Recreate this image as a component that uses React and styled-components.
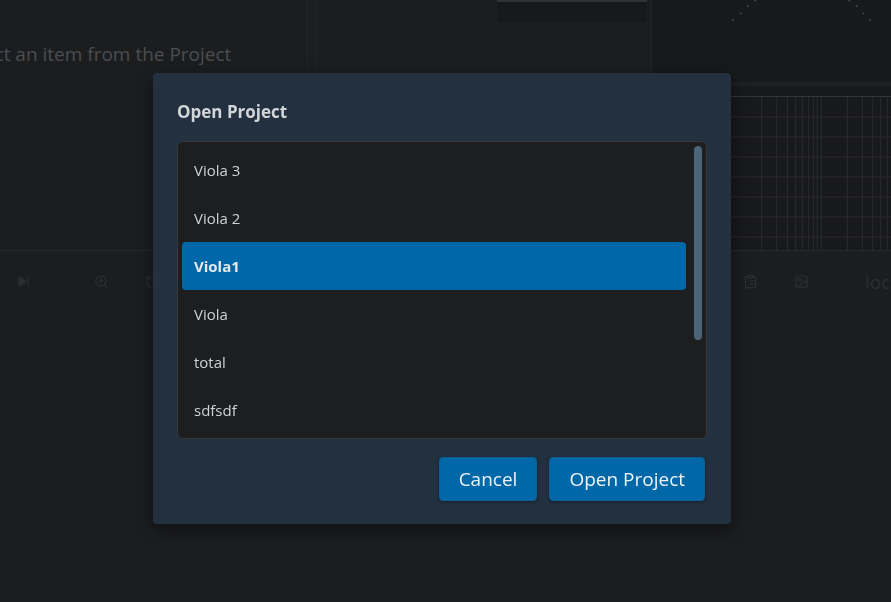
import React from "react";
import styled, { createGlobalStyle } from "styled-components";
import { SkipForward, ZoomIn, RotateCcw, ClipboardList, Image } from "lucide-react";

const GlobalStyle = createGlobalStyle`
  * { box-sizing: border-box; }
  html, body { margin: 0; padding: 0; background: #1c1d1f; }
  body { font-family: "Open Sans", "Noto Sans", sans-serif; overflow: hidden; }
`;

const Shell = styled.div`
  width: 891px;
  height: 602px;
  display: flex;
  flex-direction: column;
  background: #1c1d1f;
  overflow: hidden;
`;

const TopArea = styled.div`
  height: 251px;
  display: flex;
  border-bottom: 1px solid #27282b;
  flex-shrink: 0;
`;

const LeftPanel = styled.div`
  width: 308px;
  border-right: 1px solid #242528;
  padding-top: 40px;
  overflow: hidden;
`;

const Hint = styled.div`
  margin-left: -42px;
  font-size: 19px;
  line-height: 28px;
  color: #4a4d51;
  white-space: nowrap;
`;

const Gutter = styled.div`
  width: 9px;
  border-right: 1px solid #232427;
`;

const MiddlePanel = styled.div`
  width: 335px;
  display: flex;
  justify-content: flex-end;
  padding-right: 3px;
  border-right: 2px solid #1f2023;
`;

const FieldStub = styled.div`
  width: 150px;
  height: 22px;
  background: #18191b;
  border-top: 2px solid #303134;
`;

const RightPanel = styled.div`
  flex: 1;
  display: flex;
  flex-direction: column;
  background: #18191b;
`;

const DotsArea = styled.svg`
  display: block;
  height: 82px;
  width: 100%;
`;

const Band = styled.div`
  height: 4px;
  background: #1f2023;
`;

const Spacer = styled.div`
  height: ${(p) => p.$h}px;
`;

const RuleLine = styled.div`
  height: 1px;
  background: #35363a;
`;

const Grid = styled.svg`
  display: block;
  width: 100%;
  height: 153px;
`;

const Toolbar = styled.div`
  height: 61px;
  display: flex;
  align-items: center;
  justify-content: space-between;
  color: #2b2d30;
`;

const ToolGroup = styled.div`
  display: flex;
  align-items: center;
`;

const ToolSlot = styled.div`
  width: 30px;
  display: flex;
  justify-content: center;
  margin-left: ${(p) => p.$ml || 0}px;
`;

const ToolText = styled.span`
  margin-left: ${(p) => p.$ml || 0}px;
  width: 26px;
  overflow: hidden;
  white-space: nowrap;
  font-size: 19px;
  line-height: 28px;
  color: #2b2d30;
`;

const Backdrop = styled.div`
  position: fixed;
  inset: 0;
  display: flex;
  align-items: flex-start;
  padding: 73px 0 0 153px;
`;

const Dialog = styled.div`
  width: 578px;
  height: 451px;
  background: #22303f;
  border-radius: 4px;
  padding: 24px;
  display: flex;
  flex-direction: column;
  box-shadow: 0 6px 18px rgba(0, 0, 0, 0.45);
`;

const Title = styled.h2`
  margin: 0;
  padding-top: 1px;
  font-size: 17px;
  line-height: 28px;
  font-weight: 700;
  color: #d3d6d9;
`;

const ListBox = styled.div`
  margin-top: 15px;
  height: 298px;
  display: flex;
  padding: 4px;
  background: #1d1e20;
  border: 1px solid #36383b;
  border-radius: 6px;
`;

const Items = styled.div`
  flex: 1;
  display: flex;
  flex-direction: column;
  overflow: hidden;
`;

const Item = styled.div`
  height: 48px;
  flex-shrink: 0;
  display: flex;
  align-items: center;
  padding: 0 12px;
  border-radius: 4px;
  font-size: 15px;
  font-weight: ${(p) => (p.$selected ? 700 : 400)};
  color: ${(p) => (p.$selected ? "#e4e9ee" : "#cfd1d3")};
  background: ${(p) => (p.$selected ? "#0068a9" : "transparent")};
`;

const ScrollTrack = styled.div`
  width: 8px;
  margin-left: 8px;
  display: flex;
  flex-direction: column;
`;

const ScrollThumb = styled.div`
  height: ${(p) => p.$h}px;
  background: #4b6477;
  border-radius: 4px;
`;

const Footer = styled.div`
  margin-top: 18px;
  padding-right: 2px;
  display: flex;
  justify-content: flex-end;
  gap: 12px;
`;

const Button = styled.button`
  height: 44px;
  padding: 0 19px;
  border: 1px solid #0b5f96;
  border-radius: 4px;
  background: #0067a8;
  color: #edf2f6;
  font-family: "Open Sans", "Noto Sans", sans-serif;
  font-size: 19px;
  box-shadow: 0 1px 3px rgba(0, 0, 0, 0.35);
  cursor: pointer;
`;

const items = ["Viola 3", "Viola 2", "Viola1", "Viola", "total", "sdfsdf"];

const vLines = [109.7, 124.7, 135.3, 143.7, 150.3, 156.7, 161.3, 165.3, 169.3, 195.3, 210.3, 220.7, 228.7, 235.3];
const hLines = [20, 40, 60, 80, 100, 120, 140];
const dots = [
  [81, 20], [88.7, 13.3], [95.7, 6], [103, 0.5],
  [197.3, 0.5], [204.7, 6], [211.3, 13.3], [218, 20],
];

export default function App() {
  return (
    <>
      <GlobalStyle />
      <Shell>
        <TopArea>
          <LeftPanel>
            <Hint>Select an item from the Project</Hint>
          </LeftPanel>
          <Gutter />
          <MiddlePanel>
            <FieldStub />
          </MiddlePanel>
          <RightPanel>
            <DotsArea viewBox="0 0 239 82" preserveAspectRatio="none">
              {dots.map(([x, y], i) => (
                <circle key={i} cx={x} cy={y} r="0.9" fill="#4a4c50" />
              ))}
            </DotsArea>
            <Band />
            <Spacer $h={10} />
            <RuleLine />
            <Grid viewBox="0 0 239 153" preserveAspectRatio="none">
              {hLines.map((y) => (
                <line key={"h" + y} x1="0" x2="239" y1={y} y2={y} stroke="#2a2b2e" strokeWidth="1" />
              ))}
              {vLines.map((x) => (
                <line key={"v" + x} x1={x} x2={x} y1="0" y2="153" stroke="#2a2b2e" strokeWidth="1" />
              ))}
            </Grid>
          </RightPanel>
        </TopArea>
        <Toolbar>
          <ToolGroup>
            <ToolSlot $ml={8}>
              <SkipForward size={13} fill="currentColor" strokeWidth={2} />
            </ToolSlot>
            <ToolSlot $ml={48}>
              <ZoomIn size={15} strokeWidth={2.2} />
            </ToolSlot>
            <ToolSlot $ml={21}>
              <RotateCcw size={15} strokeWidth={2.2} />
            </ToolSlot>
          </ToolGroup>
          <ToolGroup>
            <ToolSlot>
              <ClipboardList size={15} strokeWidth={2.2} />
            </ToolSlot>
            <ToolSlot $ml={21}>
              <Image size={15} strokeWidth={2.2} />
            </ToolSlot>
            <ToolText $ml={49}>lock</ToolText>
          </ToolGroup>
        </Toolbar>
      </Shell>
      <Backdrop>
        <Dialog>
          <Title>Open Project</Title>
          <ListBox>
            <Items>
              {items.map((name) => (
                <Item key={name} $selected={name === "Viola1"}>
                  {name}
                </Item>
              ))}
            </Items>
            <ScrollTrack>
              <ScrollThumb $h={194} />
            </ScrollTrack>
          </ListBox>
          <Footer>
            <Button>Cancel</Button>
            <Button>Open Project</Button>
          </Footer>
        </Dialog>
      </Backdrop>
    </>
  );
}
